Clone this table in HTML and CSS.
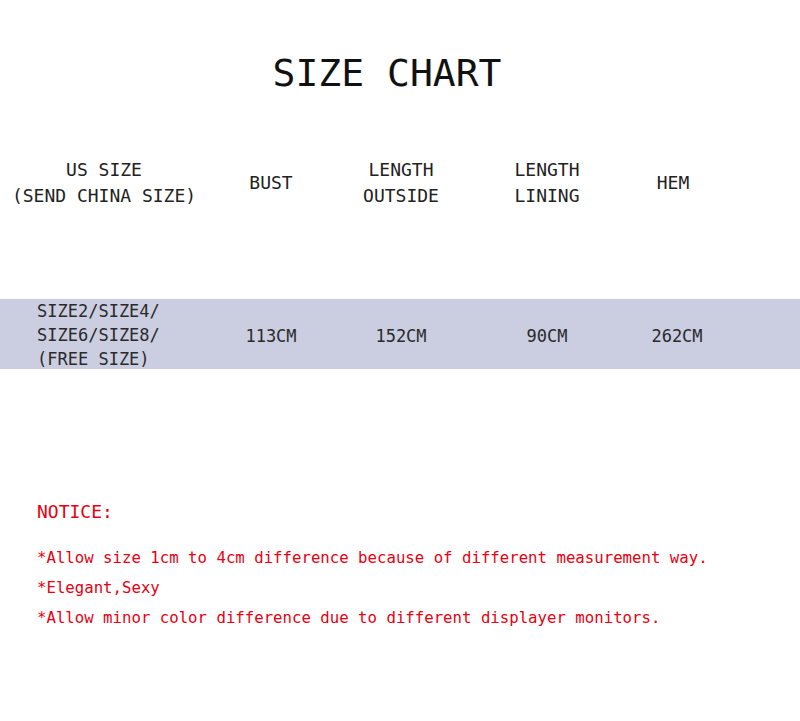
FILE: index.html
```html
<!DOCTYPE html>
<html lang="en">
<head>
<meta charset="utf-8">
<title>Size Chart</title>
<link rel="stylesheet" href="styles.css">
</head>
<body>
<main class="page">
  <h1 class="title">SIZE CHART</h1>
  <div class="row head">
    <div class="cell">US SIZE<br>(SEND CHINA SIZE)</div>
    <div class="cell">BUST</div>
    <div class="cell">LENGTH<br>OUTSIDE</div>
    <div class="cell">LENGTH<br>LINING</div>
    <div class="cell">HEM</div>
  </div>
  <div class="row data">
    <div class="cell first">SIZE2/SIZE4/<br>SIZE6/SIZE8/<br>(FREE SIZE)</div>
    <div class="cell">113CM</div>
    <div class="cell">152CM</div>
    <div class="cell">90CM</div>
    <div class="cell last">262CM</div>
  </div>
  <section class="notice">
    <h2 class="notice-title">NOTICE:</h2>
    <p class="note">*Allow size 1cm to 4cm difference because of different measurement way.</p>
    <p class="note">*Elegant,Sexy</p>
    <p class="note">*Allow minor color difference due to different displayer monitors.</p>
  </section>
</main>
</body>
</html>
```

FILE: styles.css
```css
html, body {
  margin: 0;
  padding: 0;
  background: #ffffff;
}

.page {
  width: 800px;
  height: 721px;
  font-family: "DejaVu Sans Mono", "Liberation Mono", monospace;
  color: #222;
  overflow: hidden;
}

.title {
  margin: 0;
  padding: 54px 26px 0 0;
  height: 39px;
  line-height: 39px;
  font-size: 38px;
  font-weight: normal;
  text-align: center;
  color: #111;
}

.row {
  display: grid;
  grid-template-columns: 208px 126px 134px 158px 94px;
  align-items: center;
}

.cell {
  text-align: center;
  white-space: nowrap;
}

.head {
  margin-top: 64px;
  height: 52px;
  font-size: 18px;
  line-height: 26px;
  color: #222;
}

.data {
  margin-top: 90px;
  height: 70px;
  background: #cbcde0;
  font-size: 17px;
  line-height: 24px;
  color: #2a2a2a;
}

.data .first {
  text-align: left;
  padding-left: 37px;
}

.data .cell:not(.first) {
  padding-top: 2px;
}

.data .last {
  padding-left: 8px;
}

.notice {
  margin-top: 132px;
  padding-left: 37px;
  color: #e60012;
}

.notice-title {
  margin: 0 0 20px 0;
  font-size: 18px;
  line-height: 22px;
  font-weight: normal;
}

.note {
  margin: 0;
  font-size: 15.7px;
  line-height: 30px;
  white-space: nowrap;
}
```
